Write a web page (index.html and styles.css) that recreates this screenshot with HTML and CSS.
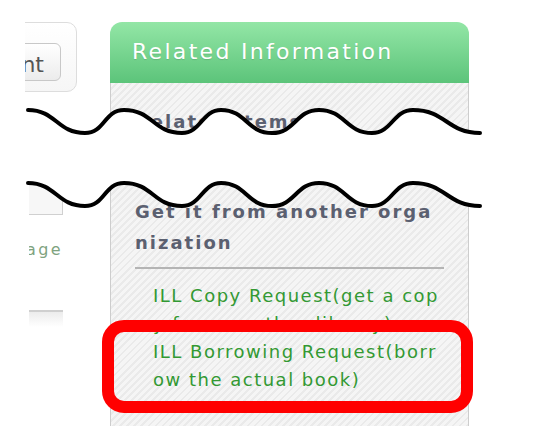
FILE: index.html
```html
<!DOCTYPE html>
<html lang="en">

<head>
    <meta charset="UTF-8">
    <meta name="viewport" content="width=device-width, initial-scale=1.0">
    <title>Related Information</title>
    <link rel="stylesheet" href="styles.css">
</head>

<body>
    <div class="page">
        <aside class="side">
            <div class="action-box">
                <button type="button" class="action-btn">Comment</button>
            </div>
            <div class="side-lower">
                <div class="field"></div>
                <div class="side-link"><a href="#">Next page</a></div>
                <div class="side-rule"></div>
                <div class="side-link muted"><span>Rename</span></div>
            </div>
        </aside>

        <section class="related">
            <h2 class="related-title">Related Information</h2>
            <div class="related-body">
                <h3 class="group-title first">Related Items</h3>
                <h3 class="group-title">Get it from another organization</h3>
                <hr class="group-rule">
                <ul class="group-links">
                    <li><a href="#">ILL Copy Request(get a copy from another library)</a></li>
                    <li><a href="#">ILL Borrowing Request(borrow the actual book)</a></li>
                </ul>
            </div>
        </section>
    </div>

    <!-- annotation layer: torn section + highlight -->
    <svg class="marks" width="540" height="426" viewBox="0 0 540 426">
        <path class="tear-fill" d="M0,110 L28,110 C56,110 57,133 85,133 C105,133 104,110 124,110 C153,110 153,133 182,133 C201,133 202,110 221,110 C246,110 247,133 272,133 C295,133 296,110 319,110 C345,110 346,133 372,133 C392,133 393,110 413,110 C446,110 447,133 480,133 L480,206 C447,206 446,183 413,183 C393,183 392,206 372,206 C346,206 345,183 319,183 C296,183 295,206 272,206 C247,206 246,183 221,183 C202,183 201,206 182,206 C153,206 153,183 124,183 C104,183 105,206 85,206 C57,206 56,183 28,183 L0,183 Z"/>
        <path class="tear-line" d="M28,110 C56,110 57,133 85,133 C105,133 104,110 124,110 C153,110 153,133 182,133 C201,133 202,110 221,110 C246,110 247,133 272,133 C295,133 296,110 319,110 C345,110 346,133 372,133 C392,133 393,110 413,110 C446,110 447,133 480,133"/>
        <path class="tear-line" d="M28,183 C56,183 57,206 85,206 C105,206 104,183 124,183 C153,183 153,206 182,206 C201,206 202,183 221,183 C246,183 247,206 272,206 C295,206 296,183 319,183 C345,183 346,206 372,206 C392,206 393,183 413,183 C446,183 447,206 480,206"/>
        <rect class="highlight" x="108" y="326" width="359" height="81" rx="16" ry="16"/>
    </svg>
</body>

</html>
```

FILE: styles.css
```css
body {
    margin: 0;
    font-family: "DejaVu Sans", Verdana, sans-serif;
    background: #fff;
    position: relative;
}

.page {
    display: flex;
    align-items: flex-start;
    padding: 22px 0 0 25px;
}

/* left column, mostly cut off */
.side {
    width: 52px;
    flex-shrink: 0;
    overflow: hidden;
}

.action-box {
    box-sizing: border-box;
    width: 192px;
    height: 70px;
    margin-left: -140px;
    display: flex;
    justify-content: flex-end;
    padding: 20px 15px 0 0;
    border: 1px solid #ddd;
    border-radius: 10px;
    background: linear-gradient(#fff, #f6f6f6);
}

.action-btn {
    height: 38px;
    padding: 4px 16px 0;
    border: 1px solid #c8c8c8;
    border-radius: 6px;
    background: linear-gradient(#fff, #ececec);
    font: 22px "DejaVu Sans", sans-serif;
    color: #555;
    white-space: nowrap;
}

.side-lower {
    margin-left: 4px;
    overflow: hidden;
}

.field,
.side-link,
.side-rule {
    width: 178px;
    margin-left: -144px;
}

.field {
    box-sizing: border-box;
    height: 65px;
    margin-top: 58px;
    background: #f7f7f7;
    border-right: 1px solid #d0d0d0;
    border-bottom: 1px solid #d0d0d0;
}

.side-link {
    display: flex;
    justify-content: flex-end;
    margin-top: 25px;
    font-size: 16px;
    line-height: 20px;
    letter-spacing: 2.4px;
    white-space: nowrap;
}

.side-link a {
    color: #7fa37f;
    text-decoration: none;
}

.side-rule {
    box-sizing: border-box;
    height: 17px;
    margin-top: 50px;
    border-top: 2px solid #cfcfcf;
    background: linear-gradient(#ececec, #fff);
}

.side-link.muted {
    margin-top: 93px;
    color: #9a9a9a;
}

/* related information panel */
.related {
    width: 359px;
    flex-shrink: 0;
    margin-left: 33px;
}

.related-title {
    box-sizing: border-box;
    height: 61px;
    margin: 0;
    padding-left: 22px;
    font-size: 22px;
    font-weight: normal;
    line-height: 59px;
    letter-spacing: 2.3px;
    color: #fff;
    text-shadow: 0 1px 1px rgba(0, 0, 0, 0.12);
    border-radius: 12px 12px 0 0;
    background: linear-gradient(#93e6a6, #5cc47a);
}

.related-body {
    padding: 23px 24px 60px;
    border: 1px solid #cdcdcd;
    border-top: 0;
    background: repeating-linear-gradient(135deg, #f5f5f5 0, #f5f5f5 3px, #eaeaea 3px, #eaeaea 5px);
}

.group-title {
    margin: 0;
    font-size: 18px;
    font-weight: bold;
    line-height: 31px;
    letter-spacing: 2px;
    color: #5b6070;
    word-break: break-all;
}

.group-title.first {
    margin-bottom: 59px;
}

.group-rule {
    height: 2px;
    margin: 9px 0 13px;
    border: 0;
    background: #b4b4b4;
}

.group-links {
    list-style: none;
    margin: 0;
    padding: 0 0 0 18px;
}

.group-links a {
    font-size: 18px;
    line-height: 28px;
    letter-spacing: 1.5px;
    color: #339933;
    text-decoration: none;
    word-break: break-all;
}

/* annotations drawn over the screenshot */
.marks {
    position: absolute;
    top: 0;
    left: 0;
    pointer-events: none;
}

.tear-fill {
    fill: #fff;
}

.tear-line {
    fill: none;
    stroke: #000;
    stroke-width: 4;
    stroke-linecap: round;
}

.highlight {
    fill: none;
    stroke: #ff0000;
    stroke-width: 12;
}
```
